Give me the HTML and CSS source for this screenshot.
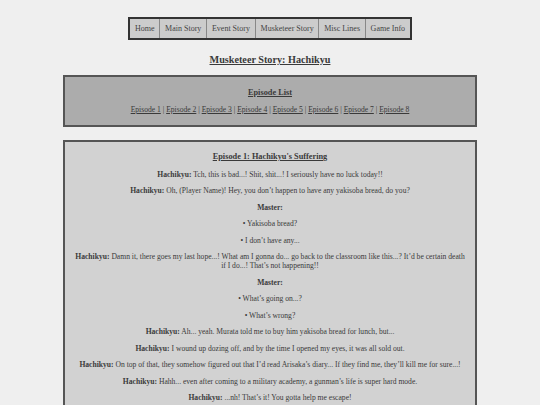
FILE: index.html
```html
<!DOCTYPE html>
<html lang="en">
<head>
    <meta charset="UTF-8">
    <meta name="viewport" content="width=device-width, initial-scale=1.0">
    <title>Musketeer Story: Hachikyu</title>
    <link rel="stylesheet" href="styles.css">
</head>
<body>
    <nav class="menu">
        <a href="#">Home</a>
        <a href="#">Main Story</a>
        <a href="#">Event Story</a>
        <a href="#">Musketeer Story</a>
        <a href="#">Misc Lines</a>
        <a href="#">Game Info</a>
    </nav>

    <h1 class="titulo">Musketeer Story: Hachikyu</h1>

    <div class="caixa lista">
        <h2>Episode List</h2>
        <p class="episodios">
            <a href="#ep1">Episode 1</a> | <a href="#ep2">Episode 2</a> | <a href="#ep3">Episode 3</a> | <a href="#ep4">Episode 4</a> | <a href="#ep5">Episode 5</a> | <a href="#ep6">Episode 6</a> | <a href="#ep7">Episode 7</a> | <a href="#ep8">Episode 8</a>
        </p>
    </div>

    <div class="caixa episodio" id="ep1">
        <h2>Episode 1: Hachikyu's Suffering</h2>
        <p><b>Hachikyu:</b> Tch, this is bad...! Shit, shit...! I seriously have no luck today!!</p>
        <p><b>Hachikyu:</b> Oh, (Player Name)! Hey, you don’t happen to have any yakisoba bread, do you?</p>
        <p><b>Master:</b></p>
        <p>• Yakisoba bread?</p>
        <p>• I don’t have any...</p>
        <p><b>Hachikyu:</b> Damn it, there goes my last hope...! What am I gonna do... go back to the classroom like this...? It’d be certain death if I do...! That’s not happening!!</p>
        <p><b>Master:</b></p>
        <p>• What’s going on...?</p>
        <p>• What’s wrong?</p>
        <p><b>Hachikyu:</b> Ah... yeah. Murata told me to buy him yakisoba bread for lunch, but...</p>
        <p><b>Hachikyu:</b> I wound up dozing off, and by the time I opened my eyes, it was all sold out.</p>
        <p><b>Hachikyu:</b> On top of that, they somehow figured out that I’d read Arisaka’s diary... If they find me, they’ll kill me for sure...!</p>
        <p><b>Hachikyu:</b> Hahh... even after coming to a military academy, a gunman’s life is super hard mode.</p>
        <p><b>Hachikyu:</b> ...nh! That’s it! You gotta help me escape!</p>
        <p><b>Master:</b></p>
        <p>• Escape?</p>
    </div>
</body>
</html>
```

FILE: styles.css
```css
body {
    font-family: 'Liberation Serif', 'Times New Roman', serif;
    font-size: 7.6px;
    color: #3a3a3a;
    background-color: #efefef;
    margin: 0;
    padding: 17px 0 0;
    text-align: center;
}
a {
    color: #3a3a3a;
}
.menu {
    display: flex;
    width: max-content;
    margin: 0 auto;
    border: 2px solid #333333;
    background-color: #cccccc;
}
.menu a {
    padding: 0 4.8px;
    line-height: 19px;
    font-size: 8px;
    color: #444444;
    text-decoration: none;
    border-left: 1px solid #888888;
}
.menu a:first-child {
    border-left: none;
}
.titulo {
    font-size: 10.2px;
    line-height: 12px;
    text-decoration: underline;
    margin: 14px 0 9px;
}
.caixa {
    width: 394px;
    margin: 0 auto 13px;
    padding: 5px 8px;
    border: 2px solid #555555;
}
.caixa h2 {
    font-size: 8.3px;
    line-height: 10px;
    text-decoration: underline;
    margin: 6px 0 6.5px;
}
.caixa p {
    line-height: 9px;
    margin: 7.5px 0;
}
.lista {
    background-color: #acacac;
}
.lista .episodios {
    margin: 6.5px 0;
}
.episodio {
    background-color: #d2d2d2;
}
.episodio h2 {
    margin-top: 5px;
}
```
